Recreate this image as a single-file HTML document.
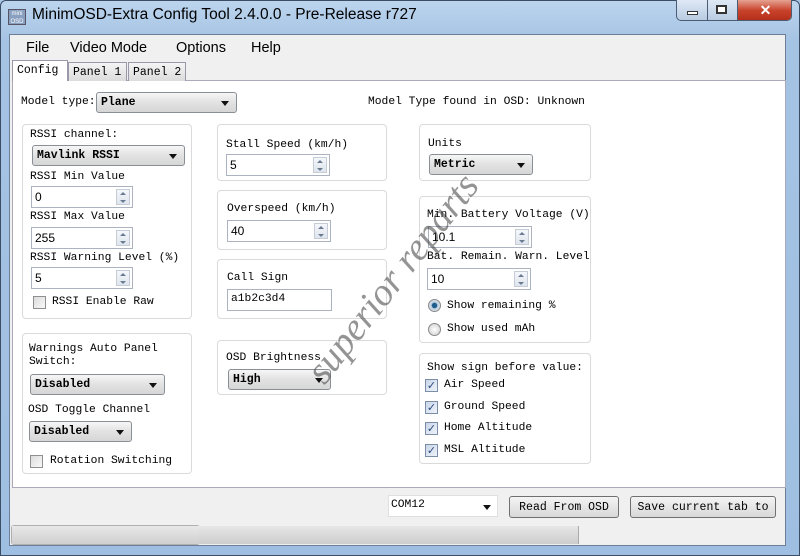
<!DOCTYPE html>
<html><head><meta charset="utf-8"><style>
*{margin:0;padding:0;box-sizing:border-box}
body{width:800px;height:556px;overflow:hidden;background:#a9c7e6;font-family:"Liberation Mono",monospace;font-size:11.3px;color:#000;position:relative}
.a{position:absolute}
.frame{left:0;top:0;width:800px;height:556px;background:linear-gradient(180deg,#bcd5ee 0,#a5c3e3 40px,#9fbfe2 100%);border:1px solid #3b4e66;border-radius:6px 6px 0 0}
.client{left:9px;top:34px;width:777px;height:512px;background:#f0f0f0;border:1px solid #6d7f96}
.title{left:32px;top:6px;font-family:"Liberation Sans",sans-serif;font-size:15.5px;color:#000}
.menu{top:40px;font-family:"Liberation Sans",sans-serif;font-size:14.5px}
.panel{left:12px;top:80px;width:774px;height:408px;background:#fff;border:1px solid #aab;}
.tab{top:62px;height:19px;border:1px solid #99a;border-bottom:none;background:linear-gradient(#f4f4f4,#dcdcdc);padding:3px 3px 0 4px;font-size:11.5px}
.grp{border:1px solid #dadada;border-radius:4px;background:#fff}
.in{height:22px;border:1px solid #aab3bf;background:#fff;padding:3px 0 0 3px;font-family:"Liberation Sans",sans-serif;font-size:12px}
.sp{position:absolute;right:2px;top:2px;width:14px;height:16px;border:1px solid #c5ccd6;background:linear-gradient(#f4f7fb,#dfe5ee)}
.sp:before{content:"";position:absolute;left:3px;top:2px;border:3px solid transparent;border-bottom:3px solid #6a7a90;border-top:none}
.sp:after{content:"";position:absolute;left:3px;top:10px;border:3px solid transparent;border-top:3px solid #6a7a90;border-bottom:none}
.cm{height:21px;border:1px solid #8a8f96;border-radius:3px;background:linear-gradient(#f6f6f6,#e2e2e2 50%,#d6d6d6);padding:3px 0 0 4px;font-weight:bold;font-size:11.5px}
.cm:after{content:"";position:absolute;right:7px;top:8px;border:4px solid transparent;border-top:5px solid #111;border-bottom:none}
.cb{width:13px;height:13px;border:1px solid #8f8f8f;background:linear-gradient(135deg,#dcdcdc,#f8f8f8)}
.ck{background:linear-gradient(135deg,#c9d6e8,#eef3fa);border-color:#7c8ea7;color:#2b4b7d;font-size:11px;line-height:11px;text-align:center;font-family:"DejaVu Sans",sans-serif}
.rb{width:13px;height:13px;border-radius:50%;border:1px solid #8a8a8a;background:radial-gradient(#fff,#ccc)}
.btn{height:22px;border:1px solid #707070;border-radius:3px;background:linear-gradient(#f4f4f4,#e6e6e6 50%,#d8d8d8);font-size:11.5px;text-align:center;padding-top:4px}
</style></head><body>
<div class="a frame"></div>
<div class="a" style="left:8px;top:9px;width:18px;height:16px;background:#8aa0c0;border:1px solid #556;font-size:6px;color:#fff;line-height:8px;text-align:center;font-family:Liberation Sans">mini<br>OSD</div>
<div class="a title">MinimOSD-Extra Config Tool 2.4.0.0 - Pre-Release r727</div>
<div class="a" style="left:676px;top:0;width:116px;height:21px;border:1px solid #4b5d74;border-top:none;border-radius:0 0 5px 5px;overflow:hidden;background:linear-gradient(#dfe9f5,#b8cbe2)">
 <div class="a" style="left:30px;top:0;width:1px;height:21px;background:#4b5d74"></div>
 <div class="a" style="left:60px;top:0;width:1px;height:21px;background:#4b5d74"></div>
 <div class="a" style="left:10px;top:11px;width:11px;height:4px;border:1px solid #333;background:#fff"></div>
 <div class="a" style="left:39px;top:5px;width:11px;height:9px;border:2px solid #333;background:#fff"></div>
 <div class="a" style="left:61px;top:0;width:55px;height:21px;background:linear-gradient(#e6a292,#c8422b 50%,#b22d18);color:#fff;font:bold 14px 'Liberation Sans';text-align:center;line-height:20px">✕</div>
</div>
<div class="a client"></div>
<div class="a menu" style="left:26px">File</div>
<div class="a menu" style="left:70px">Video Mode</div>
<div class="a menu" style="left:176px">Options</div>
<div class="a menu" style="left:251px">Help</div>
<div class="a panel"></div>
<div class="a tab" style="left:12px;top:60px;height:21px;background:#fff;width:56px;z-index:2">Config</div>
<div class="a tab" style="left:68px;width:59px">Panel 1</div>
<div class="a tab" style="left:128px;width:58px">Panel 2</div>

<div class="a" style="left:21px;top:96px">Model type:</div>
<div class="a cm" style="left:96px;top:92px;width:141px">Plane</div>
<div class="a" style="left:368px;top:96px">Model Type found in OSD: Unknown</div>

<div class="a grp" style="left:22px;top:124px;width:170px;height:195px"></div>
<div class="a" style="left:30px;top:129px">RSSI channel:</div>
<div class="a cm" style="left:32px;top:145px;width:153px">Mavlink RSSI</div>
<div class="a" style="left:30px;top:171px">RSSI Min Value</div>
<div class="a in" style="left:31px;top:186px;width:102px">0<i class="sp"></i></div>
<div class="a" style="left:30px;top:211px">RSSI Max Value</div>
<div class="a in" style="left:31px;top:227px;width:102px">255<i class="sp"></i></div>
<div class="a" style="left:30px;top:252px">RSSI Warning Level (%)</div>
<div class="a in" style="left:31px;top:267px;width:102px">5<i class="sp"></i></div>
<div class="a cb" style="left:33px;top:296px"></div>
<div class="a" style="left:52px;top:296px">RSSI Enable Raw</div>

<div class="a grp" style="left:22px;top:333px;width:170px;height:141px"></div>
<div class="a" style="left:29px;top:343px;line-height:13px">Warnings Auto Panel<br>Switch:</div>
<div class="a cm" style="left:30px;top:374px;width:135px">Disabled</div>
<div class="a" style="left:28px;top:404px">OSD Toggle Channel</div>
<div class="a cm" style="left:29px;top:421px;width:103px">Disabled</div>
<div class="a cb" style="left:30px;top:455px"></div>
<div class="a" style="left:50px;top:455px">Rotation Switching</div>

<div class="a grp" style="left:217px;top:124px;width:170px;height:57px"></div>
<div class="a" style="left:226px;top:139px">Stall Speed (km/h)</div>
<div class="a in" style="left:226px;top:154px;width:104px">5<i class="sp"></i></div>
<div class="a grp" style="left:217px;top:190px;width:170px;height:60px"></div>
<div class="a" style="left:227px;top:203px">Overspeed (km/h)</div>
<div class="a in" style="left:227px;top:220px;width:104px">40<i class="sp"></i></div>
<div class="a grp" style="left:217px;top:259px;width:170px;height:60px"></div>
<div class="a" style="left:227px;top:272px">Call Sign</div>
<div class="a in" style="left:227px;top:289px;width:105px;font-family:'Liberation Mono';font-size:11.3px">a1b2c3d4</div>
<div class="a grp" style="left:217px;top:340px;width:170px;height:55px"></div>
<div class="a" style="left:226px;top:352px">OSD Brightness</div>
<div class="a cm" style="left:228px;top:369px;width:103px">High</div>

<div class="a grp" style="left:419px;top:124px;width:172px;height:57px"></div>
<div class="a" style="left:428px;top:138px">Units</div>
<div class="a cm" style="left:429px;top:154px;width:104px">Metric</div>
<div class="a grp" style="left:419px;top:196px;width:172px;height:147px"></div>
<div class="a" style="left:427px;top:209px">Min. Battery Voltage (V)</div>
<div class="a in" style="left:428px;top:226px;width:104px">10.1<i class="sp"></i></div>
<div class="a" style="left:427px;top:251px">Bat. Remain. Warn. Level</div>
<div class="a in" style="left:427px;top:268px;width:104px">10<i class="sp"></i></div>
<div class="a rb" style="left:428px;top:299px;background:radial-gradient(#1d5d8e 30%,#bcd 40%,#eee)"></div>
<div class="a" style="left:447px;top:300px">Show remaining %</div>
<div class="a rb" style="left:428px;top:323px"></div>
<div class="a" style="left:447px;top:323px">Show used mAh</div>
<div class="a grp" style="left:419px;top:353px;width:172px;height:111px"></div>
<div class="a" style="left:427px;top:362px">Show sign before value:</div>
<div class="a cb ck" style="left:425px;top:379px">✓</div><div class="a" style="left:444px;top:379px">Air Speed</div>
<div class="a cb ck" style="left:425px;top:401px">✓</div><div class="a" style="left:444px;top:401px">Ground Speed</div>
<div class="a cb ck" style="left:425px;top:422px">✓</div><div class="a" style="left:444px;top:422px">Home Altitude</div>
<div class="a cb ck" style="left:425px;top:444px">✓</div><div class="a" style="left:444px;top:444px">MSL Altitude</div>

<div class="a" style="left:330px;top:390px;transform:rotate(-52deg);transform-origin:left bottom;font-family:'Liberation Serif',serif;font-style:italic;font-size:39px;line-height:39px;margin-top:-39px;color:rgba(60,60,60,.55);white-space:nowrap">superior reparts</div>

<div class="a" style="left:388px;top:495px;width:110px;height:22px;background:#fff;border:1px solid #e0e0e0;padding:3px 0 0 2px">COM12<span class="a" style="right:6px;top:9px;border:4px solid transparent;border-top:5px solid #111;border-bottom:none"></span></div>
<div class="a btn" style="left:509px;top:496px;width:110px">Read From OSD</div>
<div class="a btn" style="left:630px;top:496px;width:146px">Save current tab to</div>
<div class="a" style="left:11px;top:525px;width:189px;height:20px;border:1px solid #b0b0b0;border-radius:3px;background:linear-gradient(#f2f2f2,#dcdcdc)"></div>
<div class="a" style="left:12px;top:526px;width:187px;height:18px;background:linear-gradient(#e8e8e8,#cfcfcf)"></div>
<div class="a" style="left:199px;top:526px;width:380px;height:18px;background:linear-gradient(#e6e6e6,#cdcdcd);border-right:1px solid #aaa"></div>
</body></html>
